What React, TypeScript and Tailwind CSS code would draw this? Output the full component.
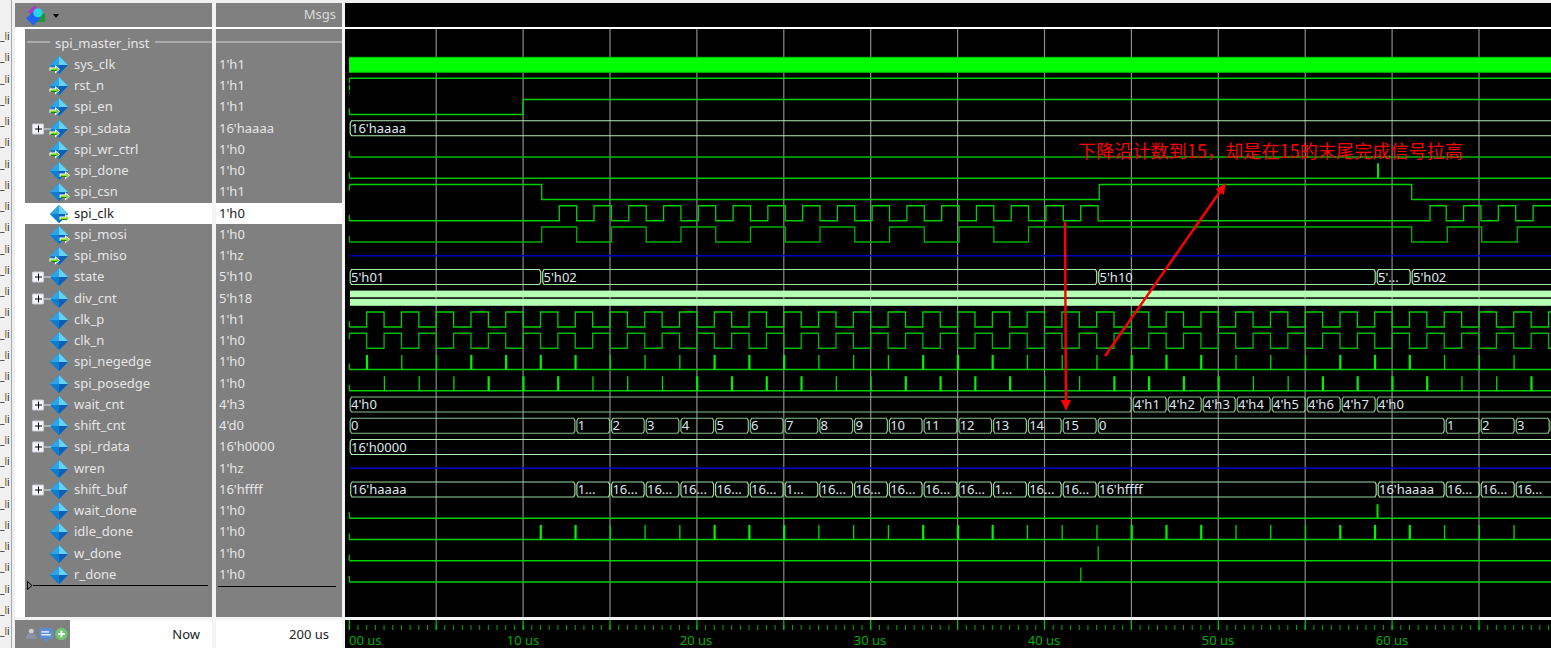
const FONT = '"Noto Sans", "Liberation Sans", sans-serif';
const G = 86.9;
const X0 = 349.3;
const P = 34.76;
const low = (i: number) => 72 + 21.25 * i;
const END = 1560;

type Row = { n: string; v: string; kind: 'in' | 'out' | 'int'; plus?: boolean };
const ROWS: Row[] = [
  { n: 'sys_clk', v: "1'h1", kind: 'in' },
  { n: 'rst_n', v: "1'h1", kind: 'in' },
  { n: 'spi_en', v: "1'h1", kind: 'in' },
  { n: 'spi_sdata', v: "16'haaaa", kind: 'in', plus: true },
  { n: 'spi_wr_ctrl', v: "1'h0", kind: 'in' },
  { n: 'spi_done', v: "1'h0", kind: 'out' },
  { n: 'spi_csn', v: "1'h1", kind: 'out' },
  { n: 'spi_clk', v: "1'h0", kind: 'out' },
  { n: 'spi_mosi', v: "1'h0", kind: 'out' },
  { n: 'spi_miso', v: "1'hz", kind: 'in' },
  { n: 'state', v: "5'h10", kind: 'int', plus: true },
  { n: 'div_cnt', v: "5'h18", kind: 'int', plus: true },
  { n: 'clk_p', v: "1'h1", kind: 'int' },
  { n: 'clk_n', v: "1'h0", kind: 'int' },
  { n: 'spi_negedge', v: "1'h0", kind: 'int' },
  { n: 'spi_posedge', v: "1'h0", kind: 'int' },
  { n: 'wait_cnt', v: "4'h3", kind: 'int', plus: true },
  { n: 'shift_cnt', v: "4'd0", kind: 'int', plus: true },
  { n: 'spi_rdata', v: "16'h0000", kind: 'int', plus: true },
  { n: 'wren', v: "1'hz", kind: 'int' },
  { n: 'shift_buf', v: "16'hffff", kind: 'int', plus: true },
  { n: 'wait_done', v: "1'h0", kind: 'int' },
  { n: 'idle_done', v: "1'h0", kind: 'int' },
  { n: 'w_done', v: "1'h0", kind: 'int' },
  { n: 'r_done', v: "1'h0", kind: 'int' },
];

function SigIcon({ kind }: { kind: Row['kind'] }) {
  return (
    <svg width="24" height="20" viewBox="0 0 24 20" className="shrink-0">
      <polygon points="10,1 19,10 10,19 1,10" fill="#1288d8" />
      <polygon points="10,1 19,10 10,10" fill="#62d2f6" />
      <polygon points="10,1 10,10 1,10" fill="#2ea4e6" />
      <polygon points="1,10 10,10 10,19" fill="#0a7ed0" />
      <polygon points="10,10 19,10 10,19" fill="#0c5fb8" />
      {kind === 'in' && (
        <g>
          <path d="M0.5 12.5h5.5v-2.5l5 4.2-5 4.2v-2.5h-5.5z" fill="#fff" />
          <path d="M1.5 13.5h5.5v-1.4l3 2.2-3 2.2v-1.4h-5.5z" fill="#7ed321" />
          <path d="M1.5 15h5.5v.7l3-1.4-3 2.3v-.6h-5.5z" fill="#1a8a00" />
        </g>
      )}
      {kind === 'out' && (
        <g>
          <path d="M10.5 12.5h5.5v-2.5l5 4.2-5 4.2v-2.5h-5.5z" fill="#fff" />
          <path d="M11.5 13.5h5.5v-1.4l3 2.2-3 2.2v-1.4h-5.5z" fill="#8ee02a" />
          <path d="M11.5 15h5.5v.7l3-1.4-3 2.3v-.6h-5.5z" fill="#1a8a00" />
        </g>
      )}
    </svg>
  );
}

function PlusBox() {
  return (
    <div className="absolute left-[7px] top-1/2 flex h-[11px] w-[12px] -translate-y-1/2 items-center justify-center rounded-[1px] border border-[#c8c8d8] bg-[#f4f6fb] text-[#111]">
      <span className="relative block h-[7px] w-[7px]">
        <span className="absolute left-0 top-[3px] h-[1px] w-[7px] bg-black" />
        <span className="absolute left-[3px] top-0 h-[7px] w-[1px] bg-black" />
      </span>
      <span className="absolute left-[11px] top-[4px] h-[1px] w-[7px] bg-[#dddddd]" />
    </div>
  );
}

function NameRow({ r }: { r: Row }) {
  const sel = r.n === 'spi_clk';
  return (
    <div className={`relative flex h-[21.25px] items-center pl-[24px] text-[13px] leading-none ${sel ? 'bg-white text-[#202020]' : 'text-[#e6e6e6]'}`}>
      {r.plus && <PlusBox />}
      <SigIcon kind={r.kind} />
      <span className="ml-[1px] pb-[1px]">{r.n}</span>
    </div>
  );
}

function ValRow({ r }: { r: Row }) {
  const sel = r.n === 'spi_clk';
  return (
    <div className={`flex h-[21.25px] items-center pl-[3px] pb-[1px] text-[13px] leading-none ${sel ? 'bg-white text-[#202020]' : 'text-[#e6e6e6]'}`}>
      {r.v}
    </div>
  );
}

function digital(i: number, startHigh: boolean, toggles: number[]) {
  const l = low(i);
  const h = l - 15;
  let lvl = startHigh;
  let d = `M${X0} ${lvl ? h : l}`;
  for (const t of toggles) {
    d += `L${t} ${lvl ? h : l}L${t} ${lvl ? l : h}`;
    lvl = !lvl;
  }
  d += `L${END} ${lvl ? h : l}`;
  return d;
}

function seq(start: number, step: number, n: number) {
  return Array.from({ length: n }, (_, k) => start + step * k);
}

function Wave({ i, high = false, toggles = [], color = '#00d000' }: { i: number; high?: boolean; toggles?: number[]; color?: string }) {
  const l = low(i);
  return (
    <g>
      <path d={digital(i, high, toggles)} fill="none" stroke={color} strokeWidth="1.3" />
      <line x1={X0} x2={X0} y1={high ? l - 15 : l} y2={high ? l - 9 : l - 6} stroke={color} strokeWidth="1.2" />
    </g>
  );
}

type Seg = [number, string];

function Bus({ i, segs, color = '#a6e6a6' }: { i: number; segs: Seg[]; color?: string }) {
  const l = low(i);
  const t = l - 15;
  return (
    <g>
      {segs.map(([a, txt], k) => {
        const b = k + 1 < segs.length ? segs[k + 1][0] : END;
        const d = `M${a + 1.2} ${t + 2.5}L${a + 2.5} ${t}L${b - 2} ${t}L${b - 0.8} ${t + 2.5}L${b - 0.8} ${l - 2.5}L${b - 2} ${l}L${a + 2.5} ${l}L${a + 1.2} ${l - 2.5}Z`;
        return (
          <g key={k}>
            <path d={d} fill="none" stroke={color} strokeWidth="1.2" />
            <text x={a + 2} y={l - 3} fontSize="13" fill="#dfe8ee" fontFamily={FONT}>
              {txt}
            </text>
          </g>
        );
      })}
    </g>
  );
}

function Pulses({ i, xs, thick }: { i: number; xs: number[]; thick: (k: number) => boolean }) {
  const l = low(i);
  return (
    <g>
      <line x1={X0} x2={END} y1={l} y2={l} stroke="#00d000" strokeWidth="1.3" />
      {xs.map((x, k) => (
        <rect key={k} x={x - (thick(k) ? 1.1 : 0.65)} y={l - 14.5} width={thick(k) ? 2.2 : 1.3} height={14.5} fill={thick(k) ? '#00f000' : '#00d800'} />
      ))}
    </g>
  );
}

function Arrow({ x1, y1, x2, y2 }: { x1: number; y1: number; x2: number; y2: number }) {
  const dx = x2 - x1;
  const dy = y2 - y1;
  const len = Math.hypot(dx, dy);
  const ux = dx / len;
  const uy = dy / len;
  const bx = x2 - ux * 11;
  const by = y2 - uy * 11;
  const nx = -uy * 5;
  const ny = ux * 5;
  return (
    <g>
      <line x1={x1} y1={y1} x2={bx} y2={by} stroke="#ff0000" strokeWidth="2.4" />
      <polygon points={`${x2},${y2} ${bx + nx},${by + ny} ${bx - nx},${by - ny}`} fill="#ff0000" />
    </g>
  );
}

const NEG_EARLY = [1, 0, 0, 1, 1, 1, 1, 0];
const negThick = (k: number) => (k < 8 ? NEG_EARLY[k] === 1 : (k + 2) % 6 < 3);
const POS_EARLY = [0, 0, 0, 1, 1, 1, 0, 0];
const posThick = (k: number) => (k < 8 ? POS_EARLY[k] === 1 : [3, 4, 5, 0].includes(k % 6));

const SHIFT_X = [576.7, 611.4, 646, 680.7, 715.4, 750.1, 784.9, 819.6, 854.4, 889.2, 923.9, 958.7, 993.4, 1028.2, 1063];
const BUF_TXT = ['1...', '16...', '16...', '16...', '16...', '16...', '1...', '16...', '16...', '16...', '16...', '16...', '1...', '16...', '16...'];

function Waves() {
  const clkEdges = [...seq(559.3, 17.38, 32), 1411.7 + 18.3, ...seq(1446.2, 17.38, 6)];
  const mosi = [541.7, ...seq(576.7, 34.76, 14), 1411.7, 1447.3, 1481.7, 1517.3];
  const clkP = seq(366.7, 17.38, 70);
  const negX = seq(367, P, 34);
  const posX = seq(384.4, P, 34);
  return (
    <svg width="1206" height="588" viewBox="345 29 1206 588" className="block">
      <rect x="345" y="29" width="1206" height="588" fill="#000" />
      {seq(X0 + G, G, 14).map((x) => (
        <line key={x} x1={x} x2={x} y1="29" y2="617" stroke="#8a8a8a" strokeWidth="1.2" />
      ))}
      <rect x="349" y="57.3" width="1202" height="15" fill="#00ff00" />
      <line x1="349" x2="1551" y1="57.3" y2="57.3" stroke="#00c000" strokeWidth="1" />
      <line x1="349" x2="1551" y1="72.3" y2="72.3" stroke="#00c000" strokeWidth="1" />
      <path d={`M${X0} ${low(1) - 15}L${END} ${low(1) - 15}`} fill="none" stroke="#00d000" strokeWidth="1.3" />
      <line x1={X0} x2={X0} y1={low(1) - 15} y2={low(1)} stroke="#00d000" strokeWidth="1.2" strokeDasharray="5 2" />
      <Wave i={2} toggles={[523]} />
      <Bus i={3} segs={[[349, "16'haaaa"]]} color="#b4ecb4" />
      <Wave i={4} color="#00b800" />
      <Wave i={5} color="#00c400" />
      <rect x="1377" y={low(5) - 15} width="2" height="15" fill="#00e000" />
      <Wave i={6} high toggles={[541.7, 1099.3, 1411.7]} />
      <Wave i={7} toggles={clkEdges} />
      <Wave i={8} toggles={mosi} color="#00b000" />
      <line x1="350" x2={END} y1={low(9) - 7.5} y2={low(9) - 7.5} stroke="#0000c0" strokeWidth="1.4" />
      <Bus
        i={10}
        segs={[
          [349, "5'h01"],
          [541.5, "5'h02"],
          [1097.5, "5'h10"],
          [1376, "5'..."],
          [1411, "5'h02"],
        ]}
      />
      <rect x="350" y="290.6" width="1201" height="6.7" fill="#b4ffb4" />
      <rect x="350" y="298.8" width="1201" height="7" fill="#b4ffb4" />
      <Wave i={12} toggles={clkP} />
      <Wave i={13} high toggles={clkP} color="#00b800" />
      <Pulses i={14} xs={negX} thick={negThick} />
      <line x1={X0} x2={X0} y1={low(14)} y2={low(14) - 6} stroke="#00d000" strokeWidth="1.2" />
      <Pulses i={15} xs={posX} thick={posThick} />
      <line x1={X0} x2={X0} y1={low(15)} y2={low(15) - 6} stroke="#00d000" strokeWidth="1.2" />
      <Bus
        i={16}
        color="#88c088"
        segs={[
          [349, "4'h0"],
          [1132, "4'h1"],
          [1167, "4'h2"],
          [1202, "4'h3"],
          [1236, "4'h4"],
          [1271, "4'h5"],
          [1306, "4'h6"],
          [1341, "4'h7"],
          [1376, "4'h0"],
        ]}
      />
      <Bus
        i={17}
        color="#88c088"
        segs={[
          [349, '0'],
          ...SHIFT_X.slice(0, 14).map((x, k): Seg => [x - 1, String(k + 1)]),
          [1062, '15'],
          [1097, '0'],
          [1445, '1'],
          [1480, '2'],
          [1515, '3'],
          [1550, ''],
        ] as Seg[]}
      />
      <Bus i={18} segs={[[349, "16'h0000"]]} color="#b4ecb4" />
      <line x1="350" x2={END} y1={low(19) - 7.5} y2={low(19) - 7.5} stroke="#0000d0" strokeWidth="1.4" />
      <Bus
        i={20}
        color="#9cd89c"
        segs={[
          [349.5, "16'haaaa"],
          ...SHIFT_X.map((x, k): Seg => [x - 1, BUF_TXT[k]]),
          [1097, "16'hffff"],
          [1377, "16'haaaa"],
          [1445, '16...'],
          [1480, '16...'],
          [1515, '16...'],
        ]}
      />
      <Wave i={21} />
      <rect x="1376.5" y={low(21) - 14} width="2" height="14" fill="#00e000" />
      <Pulses i={22} xs={seq(367 + 5 * P, P, 29)} thick={(k) => negThick(k + 5)} />
      <line x1={X0} x2={X0} y1={low(22)} y2={low(22) - 6} stroke="#00d000" strokeWidth="1.2" />
      <Wave i={23} />
      <rect x="1097.6" y={low(23) - 14.5} width="1.2" height="14.5" fill="#00d800" />
      <Wave i={24} />
      <rect x="1080.2" y={low(24) - 14.5} width="1.2" height="14.5" fill="#00d800" />
      <Arrow x1={1065} y1={222} x2={1066} y2={411} />
      <Arrow x1={1105} y1={356} x2={1226} y2={183} />
      <text
        x="1078"
        y="158"
        fontSize="18"
        letterSpacing="0.13"
        fill="#ff0000"
        fontFamily='"Noto Sans CJK SC", "Liberation Sans", sans-serif'
      >
        下降沿计数到15，却是在15的末尾完成信号拉高
      </text>
    </svg>
  );
}

function Ruler() {
  const majors = seq(X0, G, 14);
  const minors = seq(X0, G / 10, 140);
  const labels: [number, string][] = [
    [523, '10 us'],
    [696, '20 us'],
    [870, '30 us'],
    [1044, '40 us'],
    [1218, '50 us'],
    [1392, '60 us'],
  ];
  return (
    <svg width="1206" height="28" viewBox="345 620 1206 28" className="block">
      <rect x="345" y="620" width="1206" height="28" fill="#000" />
      {minors.map((x) => (
        <line key={x} x1={x} x2={x} y1="625" y2="630" stroke="#00a800" strokeWidth="1" />
      ))}
      {majors.map((x) => (
        <line key={x} x1={x} x2={x} y1="620" y2="630" stroke="#00c800" strokeWidth="1.2" />
      ))}
      <text x="349" y="644.5" fontSize="13" fill="#00b000" fontFamily={FONT}>
        00 us
      </text>
      {labels.map(([x, s]) => (
        <text key={s} x={x} y="644.5" fontSize="13" fill="#00b000" textAnchor="middle" fontFamily={FONT}>
          {s}
        </text>
      ))}
    </svg>
  );
}

function LogoIcon() {
  return (
    <svg width="22" height="21" viewBox="0 0 24 22">
      <polygon points="9,0 17,6 9,13 2,7" fill="#b03ac8" />
      <rect x="11" y="9" width="10" height="9" fill="#1f9a38" />
      <polygon points="8,7 16,14 8,22 0,14" fill="#1e64f0" />
      <circle cx="13" cy="8" r="5" fill="#22d6e8" />
    </svg>
  );
}

function FooterIcons() {
  return (
    <svg width="46" height="16" viewBox="0 0 46 16">
      <circle cx="5.5" cy="4" r="2.5" fill="#d0d0d8" />
      <path d="M0 10c1-3 3-4 5.5-4s4.5 1 5.5 4v2H0z" fill="#8d93a4" />
      <rect x="14" y="1" width="14" height="11" rx="1" fill="#5b8fd8" />
      <rect x="16" y="4" width="8" height="1.5" fill="#e8f0ff" />
      <rect x="16" y="7" width="10" height="1.5" fill="#e8f0ff" />
      <rect x="19" y="12" width="4" height="2" fill="#5b8fd8" />
      <circle cx="37" cy="7" r="6.5" fill="#6fc46f" />
      <rect x="33.5" y="6" width="7" height="2" fill="#fff" />
      <rect x="36" y="3.5" width="2" height="7" fill="#fff" />
    </svg>
  );
}

function GroupLine({ className }: { className: string }) {
  return <div className={`h-[1px] -translate-y-[1.5px] bg-[#d4d4d4] ${className}`} />;
}

export default function App() {
  return (
    <div className="flex h-[648px] w-[1551px] overflow-hidden bg-[#f0f0f0]" style={{ fontFamily: FONT }}>
      <div className="flex w-[15px] shrink-0">
        <div className="flex w-[11px] shrink-0 flex-col overflow-hidden pt-[26px] text-[10px] leading-[21.25px] text-[#222]">
          {Array.from({ length: 29 }, (_, i) => (
            <span key={i} className="block h-[21.25px] whitespace-nowrap">
              _<span className="text-[#7a5a20]">l</span>i
            </span>
          ))}
        </div>
        <div className="w-[1px] bg-[#a8a8a8]" />
      </div>
      <div className="flex flex-1 flex-col pt-[3px]">
        <div className="flex h-[24px] shrink-0">
          <div className="flex w-[197px] items-center bg-[#808080] pl-[11px]">
            <LogoIcon />
            <span className="ml-[5px] mt-[2px] h-0 w-0 border-x-[3px] border-t-[4px] border-x-transparent border-t-black" />
          </div>
          <div className="w-[4px] bg-[#f4f4f4]" />
          <div className="flex w-[126px] items-center justify-end bg-[#808080] pb-[1px] pr-[6px] text-[13px] text-[#dcdcdc]">Msgs</div>
          <div className="w-[3px] bg-[#f4f4f4]" />
          <div className="flex-1 bg-black" />
        </div>
        <div className="h-[2px] shrink-0 bg-white" />
        <div className="flex h-[588px] shrink-0">
          <div className="flex w-[197px] bg-white">
            <div className="w-[10px] shrink-0" />
            <div className="flex-1 bg-[#808080] pt-[4px]">
              <div className="flex h-[21.25px] items-center gap-[5px] pl-[2px] text-[13px] leading-none text-[#e6e6e6]">
                <GroupLine className="w-[23px]" />
                <span className="whitespace-nowrap pb-[1px]">spi_master_inst</span>
                <GroupLine className="flex-1" />
              </div>
              {ROWS.map((r) => (
                <NameRow key={r.n} r={r} />
              ))}
              <div className="-mt-[4.5px] flex items-center pl-[2px]">
                <svg width="6" height="9" viewBox="0 0 6 9" className="shrink-0">
                  <polygon points="0.5,0.5 5,4.5 0.5,8.5" fill="none" stroke="#000" strokeWidth="1" />
                </svg>
                <div className="h-[1px] w-[175px] bg-black" />
              </div>
            </div>
          </div>
          <div className="w-[4px] bg-[#f4f4f4]" />
          <div className="w-[126px] bg-[#808080] pt-[4px]">
            <div className="flex h-[21.25px] items-center">
              <GroupLine className="w-full" />
            </div>
            {ROWS.map((r) => (
              <ValRow key={r.n} r={r} />
            ))}
            <div className="ml-[2px] h-[1px] w-[118px] bg-black" />
          </div>
          <div className="w-[3px] bg-[#f4f4f4]" />
          <div className="flex-1 overflow-hidden">
            <Waves />
          </div>
        </div>
        <div className="h-[3px] shrink-0 bg-[#f4f4f4]" />
        <div className="flex h-[28px] shrink-0">
          <div className="flex w-[55px] items-start bg-[#808080] pl-[11px] pt-[7px]">
            <FooterIcons />
          </div>
          <div className="flex w-[142px] items-center justify-end bg-white pt-[2px] pr-[12px] text-[13px] text-[#222]">Now</div>
          <div className="w-[4px] bg-[#f4f4f4]" />
          <div className="flex w-[126px] items-center justify-end bg-white pt-[2px] pr-[13px] text-[13px] text-[#222]">200 us</div>
          <div className="w-[3px] bg-[#f4f4f4]" />
          <div className="flex-1 overflow-hidden">
            <Ruler />
          </div>
        </div>
      </div>
    </div>
  );
}
